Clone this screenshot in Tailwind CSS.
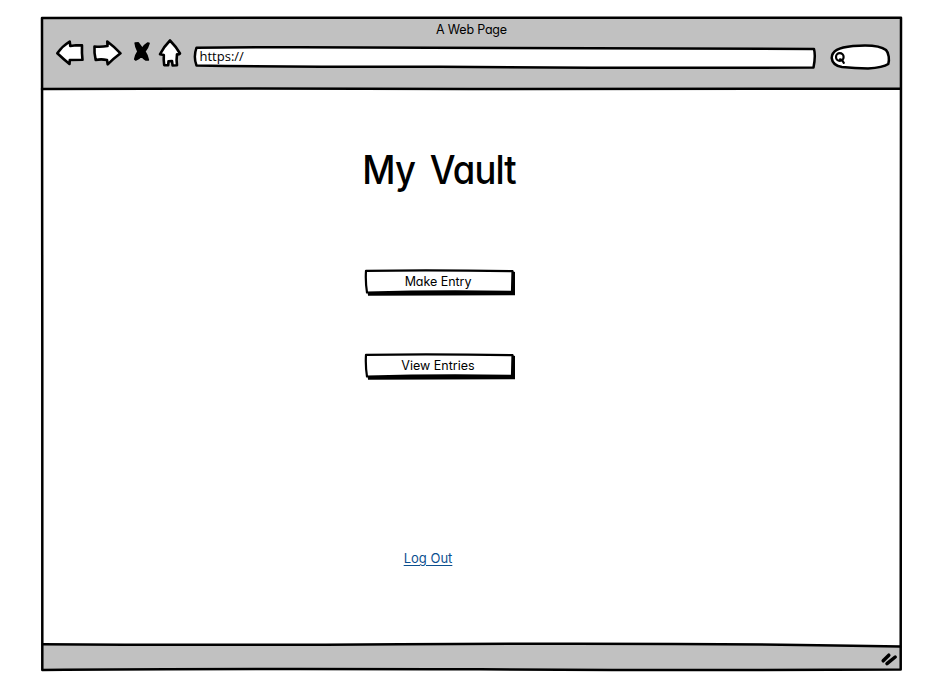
<!DOCTYPE html>
<html lang="en">
<head>
<meta charset="utf-8">
<title>My Vault</title>
<script src="https://cdn.jsdelivr.net/npm/@tailwindcss/browser@4"></script>
</head>
<body class="bg-white">
<div class="relative flex h-[698px] w-[926px] flex-col overflow-hidden pt-[18px] pl-[42px] font-['Inter','Noto_Sans',sans-serif] text-[13px] leading-4 text-black [font-feature-settings:'cv11']">
  <header class="h-[71px] w-[859px] bg-[#c1c1c1] pt-[4px]">
    <div class="text-center text-[12.5px] tracking-[-0.2px]">A Web Page</div>
    <div class="flex">
      <svg class="h-[32px] w-[146px] shrink-0" viewBox="42 38 146 32" fill="white" stroke="black" stroke-width="2.6" stroke-linejoin="round" stroke-linecap="round">
        <path d="M57.3 53.2Q62.5 46 69.7 41.5L70.3 46L76 45.2L82 45.4Q81.7 53 82.5 59.8L69.8 60L69.5 64Q64 59.5 57.3 53.2Z"/>
        <path d="M94.5 46.5Q101 47.3 107.5 46L107.3 41.5Q114 46.5 120.5 53.3Q113 59 107.7 64.4L107 60Q101 58.8 95.7 60Q94 53 94.5 46.5Z"/>
        <path d="M135.2 43L138.3 42.9Q140.5 46 142.3 48.5Q145 44.5 147.5 43.2L149 43.4Q148 47.5 144.8 51.5Q147.5 55.5 148.3 59.8L146 60Q143 58 141.3 55.7Q139 59 135.8 60L134.8 59.2Q135.5 55 138 51.5Q135.5 47 135.2 43Z" fill="black" stroke-width="1.7"/>
        <path d="M170 40.5Q176 46.5 180 53.5Q178.5 55 177 54.3Q176.2 60 177 65.3L172.6 65.5L172 61L168.5 61.3L168.2 65.2L164.2 65.2Q163.5 60 163.8 55L160 54.3Q163.5 47 170 40.5Z"/>
      </svg>
      <div class="relative flex h-[32px] w-[634px] shrink-0 items-center">
        <svg class="absolute inset-0 h-[32px] w-[634px]" viewBox="188 38 634 32" fill="white" stroke="black" stroke-width="2.5" stroke-linejoin="round">
          <path d="M196.5 47.7Q300 46.8 430 47.8Q620 49 814 49Q815.8 56 813.5 67.5Q620 68.5 440 66.7Q300 67 196.5 65.5Q193.2 57 196.5 47.7Z"/>
        </svg>
        <span class="relative mt-[4px] ml-[11.5px] font-['Open_Sans',sans-serif] text-[13px]">https://</span>
      </div>
      <svg class="h-[32px] w-[72px] shrink-0" viewBox="822 38 72 32" fill="white" stroke="black" stroke-width="2.5" stroke-linecap="round" stroke-linejoin="round">
        <path d="M831.7 58C832 51 838 47.5 853 46C868 44.7 881 46 886 50C889 53 889.5 60 888.3 64Q883 67.5 868 68.5Q855 68 842 67Q832.5 65.5 831.7 58Z"/>
        <circle cx="839.8" cy="57" r="3.8" stroke-width="2.2"/><path d="M840 59.3L842 60L843.8 62.8" fill="none" stroke-width="2.2"/>
      </svg>
    </div>
  </header>
  <main class="flex h-[556px] w-[796px] flex-col items-center">
    <h1 class="mt-[57px] mr-[1px] h-[48px] scale-x-[0.935] text-[39px] leading-[48px] font-medium whitespace-nowrap tracking-[-0.9px] [word-spacing:6px]">My Vault</h1>
    <button class="relative mt-[75px] flex h-[28px] w-[152px] items-center justify-center text-[12.5px] tracking-[-0.05px]">
      <svg class="absolute inset-0" viewBox="364 269 152 28"><path d="M367.5 290L512 291L511.5 271L515 272V295.3L368 295.8Z"/><path d="M366 270.8Q437 269.8 512.5 271.2L512 291.8Q440 290.5 367 292.5Q365.3 282 366 270.8Z" fill="white" stroke="black" stroke-width="2.2" stroke-linejoin="round"/></svg>
      <span class="relative mt-[-3px] mr-[4px]">Make Entry</span>
    </button>
    <button class="relative mt-[56px] flex h-[28px] w-[152px] items-center justify-center text-[12.5px] tracking-[0px]">
      <svg class="absolute inset-0" viewBox="364 269 152 28"><path d="M367.5 290L512 291L511.5 271L515 272V295.3L368 295.8Z"/><path d="M366 270.8Q437 269.8 512.5 271.2L512 291.8Q440 290.5 367 292.5Q365.3 282 366 270.8Z" fill="white" stroke="black" stroke-width="2.2" stroke-linejoin="round"/></svg>
      <span class="relative mt-[-3px] mr-[4px]">View Entries</span>
    </button>
    <a href="#" class="mt-[169px] mr-[24px] text-[13px] text-[#0b4f8f] underline underline-offset-2">Log Out</a>
  </main>
  <footer class="h-[25px] w-[859px] bg-[#c1c1c1]"></footer>
  <svg class="pointer-events-none absolute inset-0" width="926" height="698" viewBox="0 0 926 698" fill="none" stroke="black" stroke-width="2.5" stroke-linejoin="round" stroke-linecap="round">
    <path d="M43 643.7Q250 645.5 440 644Q700 642.5 900 646.5V640H43Z" fill="white" stroke="none"/>
    <path d="M42 18Q240 17 470 17.7Q700 18.3 901 17.8Q900.3 340 900.7 669.5Q700 670.5 480 669.3Q200 668.5 42.3 670Q43 500 42.3 350Q41.5 180 42 18Z"/>
    <path d="M42 89Q250 87.8 470 89Q700 89.5 900 88.7M43 644.2Q200 645.5 400 644.2Q720 642.5 900 646.6"/>
    <path d="M883.2 660.8L888.8 655.2M887 663.6L895.2 657" stroke-width="3.5"/>
  </svg>
</div>
</body>
</html>
